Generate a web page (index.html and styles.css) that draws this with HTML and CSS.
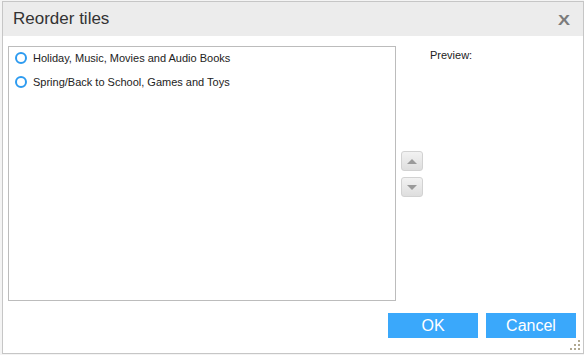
FILE: index.html
```html
<!DOCTYPE html>
<html>
<head>
<meta charset="utf-8">
<link rel="stylesheet" href="styles.css">
</head>
<body>
<div class="dialog">
  <div class="header">
    <span class="title">Reorder tiles</span>
    <span class="close">X</span>
  </div>
  <div class="main">
    <div class="list">
      <div class="item"><span class="radio"></span><span>Holiday, Music, Movies and Audio Books</span></div>
      <div class="item"><span class="radio"></span><span>Spring/Back to School, Games and Toys</span></div>
    </div>
    <div class="arrows">
      <button class="arrow"><span class="tri up"></span></button>
      <button class="arrow"><span class="tri down"></span></button>
    </div>
    <div class="preview">Preview:</div>
  </div>
  <div class="footer">
    <button class="btn">OK</button>
    <button class="btn">Cancel</button>
  </div>
  <div class="grip">
    <i class="d1"></i><i class="d2"></i><i class="d3"></i><i class="d4"></i><i class="d5"></i><i class="d6"></i>
  </div>
</div>
</body>
</html>
```
FILE: styles.css
```css
html, body {
  margin: 0;
  padding: 0;
  background: #f4f4f4;
  font-family: "Liberation Sans", Arial, sans-serif;
}
.dialog {
  position: relative;
  box-sizing: border-box;
  width: 582px;
  height: 353px;
  margin: 1px 0 0 2px;
  border: 1px solid #c6c6c6;
  background: #fff;
}
.header {
  height: 34px;
  background: #ececec;
  display: flex;
  align-items: center;
  justify-content: space-between;
  padding: 0 13px 0 10px;
}
.title {
  font-size: 17px;
  color: #333;
}
.close {
  display: inline-block;
  font-size: 15px;
  font-weight: bold;
  color: #7b7b7b;
  transform: scaleX(1.2);
  transform-origin: right center;
  margin-top: 1px;
}
.main {
  display: flex;
  margin-top: 10px;
  padding-left: 5px;
  height: 255px;
}
.list {
  box-sizing: border-box;
  width: 388px;
  height: 255px;
  border: 1px solid #bcbcbc;
  padding-left: 6px;
}
.item {
  display: flex;
  align-items: center;
  height: 24px;
  font-size: 11px;
  color: #222;
  margin-top: -1px;
  margin-bottom: 1px;
}
.radio {
  box-sizing: border-box;
  width: 12px;
  height: 12px;
  border: 2px solid #2d9bf0;
  border-radius: 50%;
  margin-right: 6px;
}
.arrows {
  display: flex;
  flex-direction: column;
  justify-content: center;
  gap: 6px;
  margin-left: 5px;
  padding-top: 1px;
}
.arrow {
  box-sizing: border-box;
  width: 22px;
  height: 20px;
  padding: 0;
  border: 1px solid #d2d2d2;
  border-radius: 3px;
  background: linear-gradient(#f2f2f2, #dedede);
  display: flex;
  align-items: center;
  justify-content: center;
}
.tri {
  width: 0;
  height: 0;
  border-left: 5px solid transparent;
  border-right: 5px solid transparent;
}
.tri.up { border-bottom: 5px solid #9a9a9a; }
.tri.down { border-top: 5px solid #9a9a9a; }
.preview {
  margin-left: 7px;
  padding-top: 3px;
  font-size: 11px;
  color: #222;
}
.footer {
  display: flex;
  justify-content: flex-end;
  gap: 8px;
  margin-top: 12px;
  padding-right: 7px;
}
.btn {
  width: 90px;
  height: 25px;
  border: 0;
  padding: 0;
  background: #3aa8fb;
  color: #fff;
  font-family: "Liberation Sans", Arial, sans-serif;
  font-size: 16px;
}
.grip {
  position: absolute;
  right: 2px;
  bottom: 2px;
  width: 11px;
  height: 11px;
}
.grip i {
  position: absolute;
  width: 2px;
  height: 2px;
  background: #b0a890;
}
.grip .d1 { right: 1px; top: 0; }
.grip .d2 { right: 1px; top: 4px; }
.grip .d3 { right: 5px; top: 4px; }
.grip .d4 { right: 1px; top: 8px; }
.grip .d5 { right: 5px; top: 8px; }
.grip .d6 { right: 9px; top: 8px; }
```
